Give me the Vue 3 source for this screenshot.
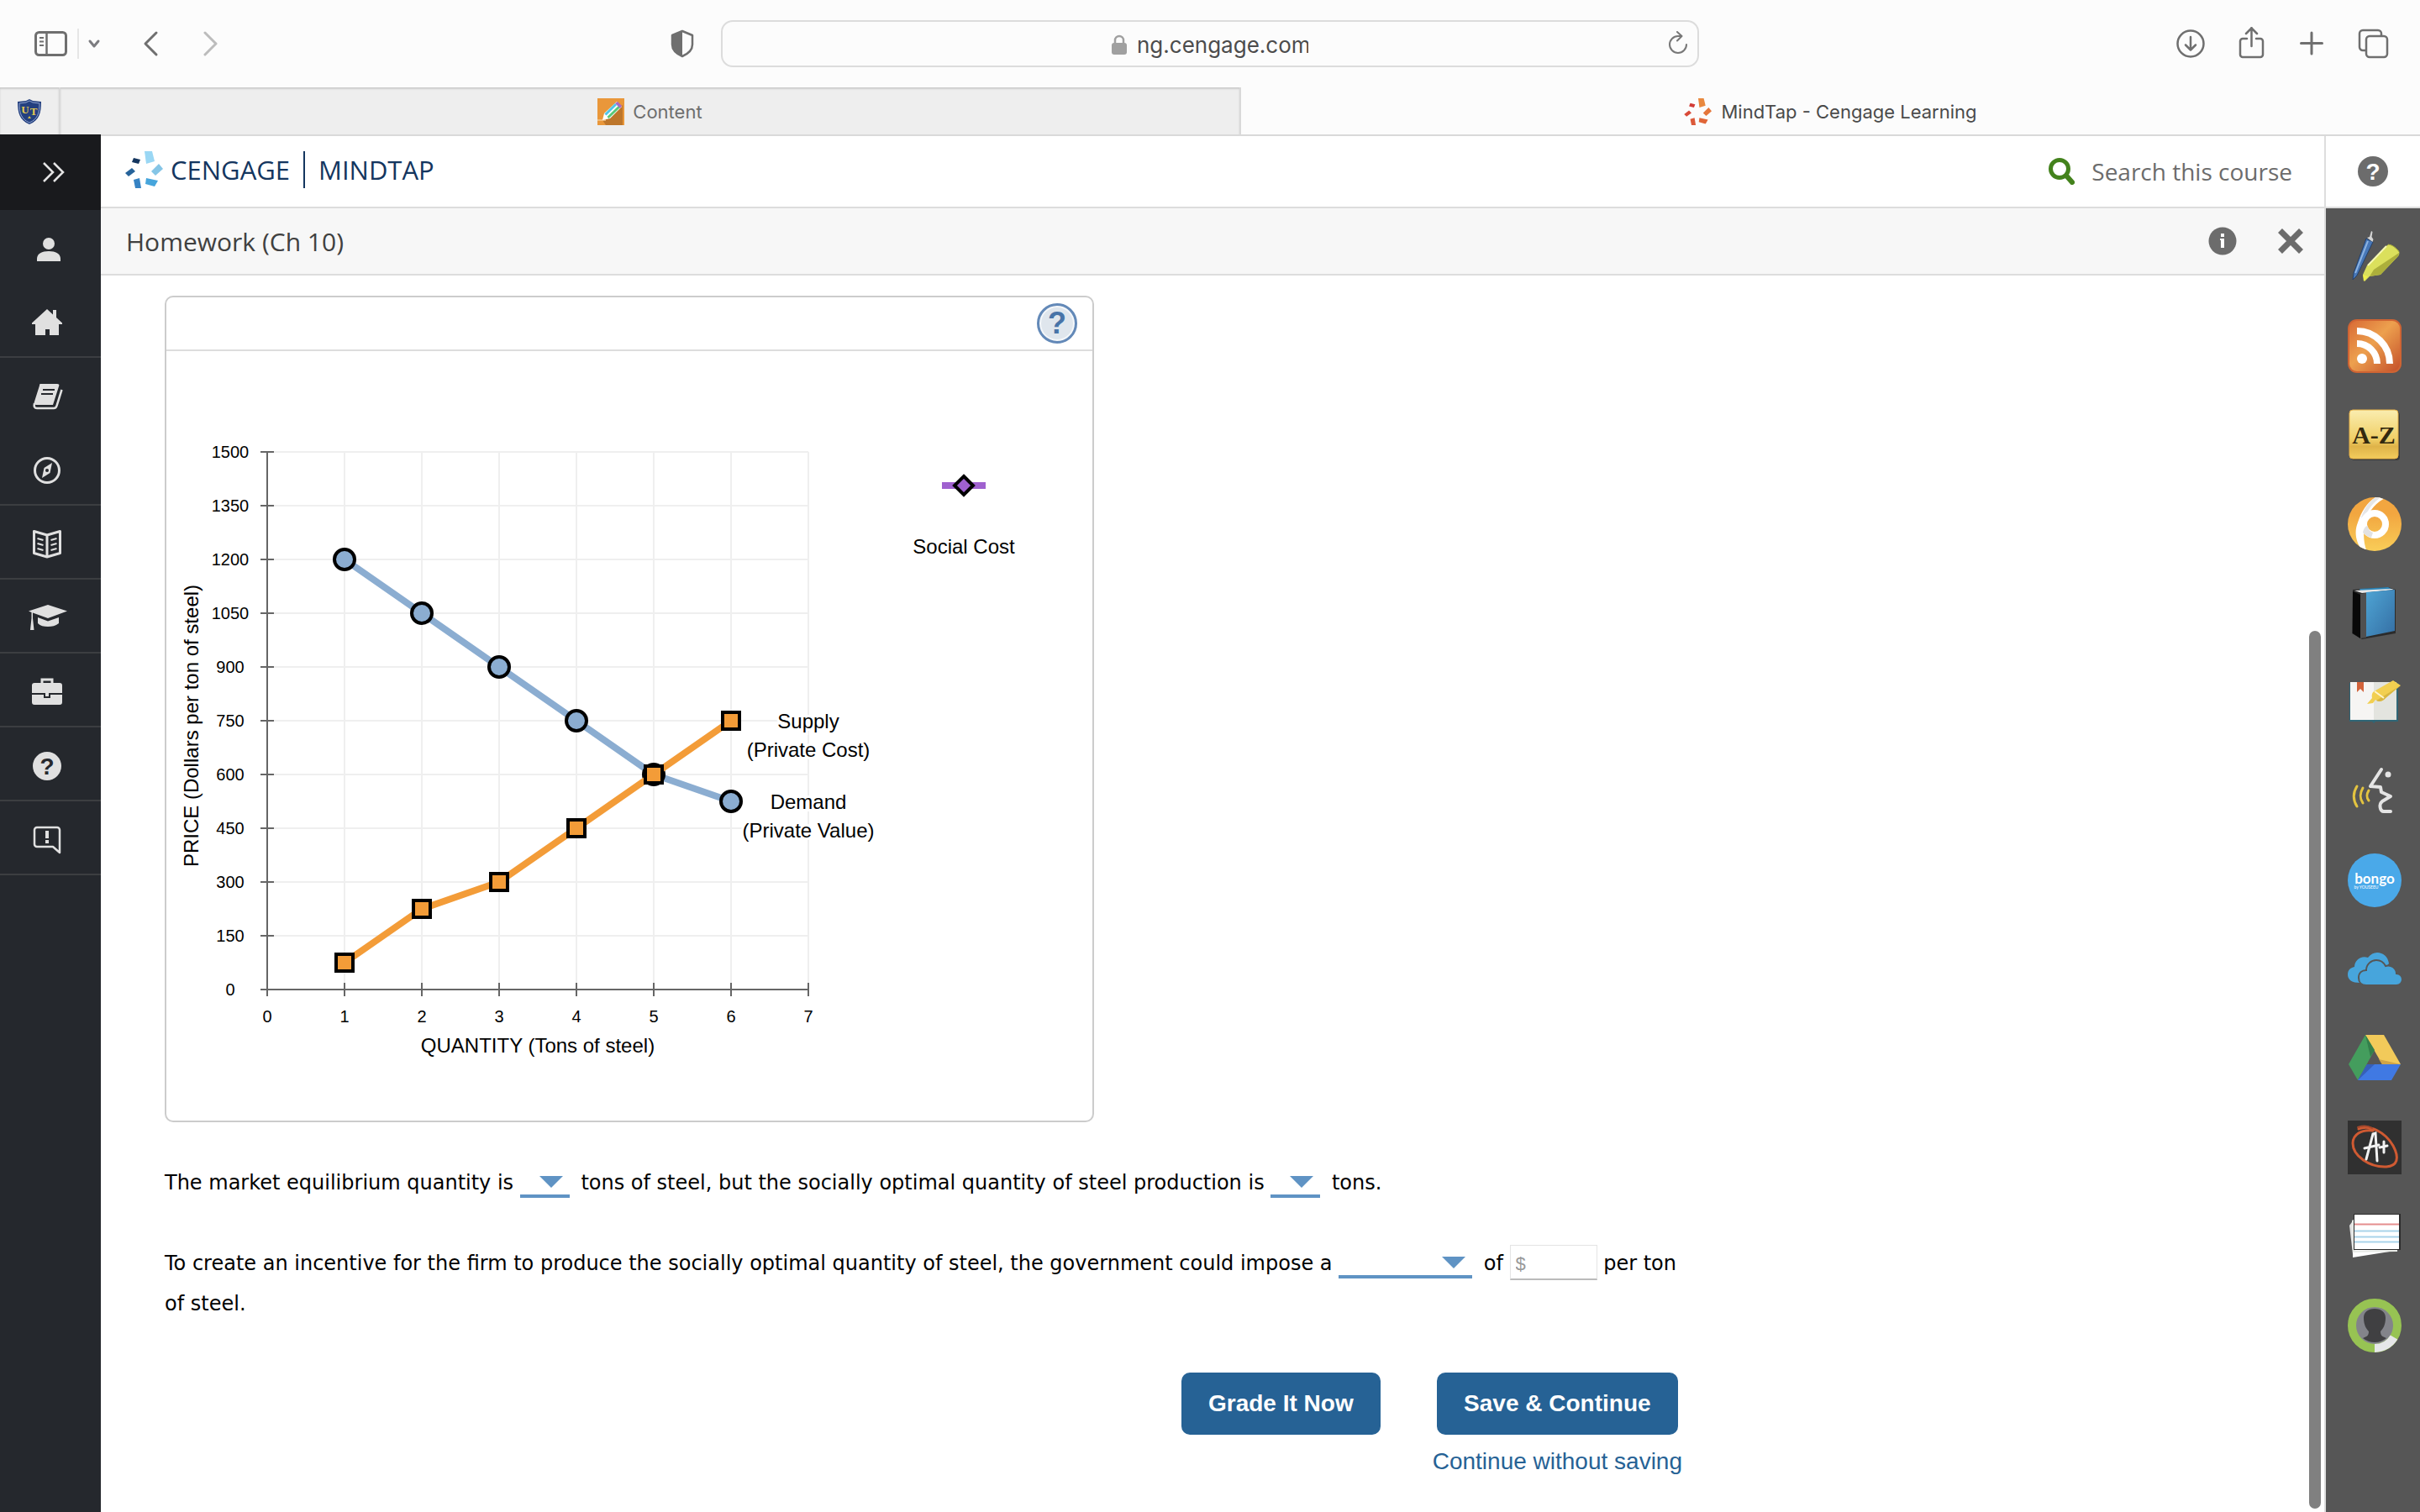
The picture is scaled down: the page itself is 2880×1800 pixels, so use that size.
<template>
  <div class="screen">
    <header class="browser">
      <div class="toolbar">
        <div class="toolbar-side">
          <button class="tool" aria-label="Show sidebar">
            <svg width="40" height="32" viewBox="0 0 40 32" fill="none" stroke="#6f6f6f">
              <rect x="1.5" y="2.5" width="36" height="27" rx="4" stroke-width="3" />
              <path d="M14.5 3v26" stroke-width="2.5" />
              <path d="M6 9h5M6 13.500h5M6 18h5" stroke-width="2" />
            </svg>
          </button>
          <span class="tool-divider"></span>
          <button class="tool tool--small" aria-label="Tab groups">
            <svg width="16" height="12" viewBox="0 0 16 12" fill="none" stroke="#7c7c80" stroke-width="3" stroke-linecap="round" stroke-linejoin="round">
              <path d="M3 3l5 6 5-6" />
            </svg>
          </button>
          <button class="tool tool--back" aria-label="Back">
            <svg width="20" height="32" viewBox="0 0 20 32" fill="none" stroke="#6f6f6f" stroke-width="3" stroke-linecap="round" stroke-linejoin="round">
              <path d="M16 3L3 16l13 13" />
            </svg>
          </button>
          <button class="tool tool--forward" aria-label="Forward" disabled>
            <svg width="20" height="32" viewBox="0 0 20 32" fill="none" stroke="#bcbcbc" stroke-width="3" stroke-linecap="round" stroke-linejoin="round">
              <path d="M4 3l13 13L4 29" />
            </svg>
          </button>
          <button class="tool tool--shield" aria-label="Privacy report">
            <svg width="28" height="34" viewBox="0 0 28 34" fill="none">
              <path d="M14 2l12 5v11c0 7-5 11-12 14C7 29 2 25 2 18V7z" stroke="#6f6f6f" stroke-width="2.500" stroke-linejoin="round" />
              <path d="M14 2v30C7 29 2 25 2 18V7z" fill="#6f6f6f" />
            </svg>
          </button>
        </div>

        <div class="address">
          <label class="address-field">
            <svg width="18" height="24" viewBox="0 0 18 24" fill="none">
              <rect x="0" y="10" width="18" height="14" rx="3" fill="#a0a0a0" />
              <path d="M4 11V7a5 5 0 0 1 10 0v4" stroke="#a0a0a0" stroke-width="2.500" />
            </svg>
            <input v-model="url" type="text" aria-label="Address" />
          </label>
          <button class="tool reload" aria-label="Reload">
            <svg width="26" height="30" viewBox="0 0 26 30" fill="none" stroke="#777" stroke-width="2" stroke-linecap="round" stroke-linejoin="round">
              <path d="M23 16a10 10 0 1 1-10-10h4M12 1l5.500 5L12 11.500" />
            </svg>
          </button>
        </div>

        <div class="toolbar-side toolbar-side--right">
          <button class="tool" aria-label="Downloads">
            <svg width="40" height="40" viewBox="0 0 40 40" fill="none" stroke="#6f6f6f" stroke-width="2.500" stroke-linecap="round" stroke-linejoin="round">
              <circle cx="19" cy="20" r="15.500" />
              <path d="M19 12v15M13 21.500l6 6 6-6" />
            </svg>
          </button>
          <button class="tool" aria-label="Share">
            <svg width="40" height="40" viewBox="0 0 40 40" fill="none" stroke="#6f6f6f" stroke-width="2.500" stroke-linecap="round" stroke-linejoin="round">
              <path d="M14 14H9a3 3 0 0 0-3 3v16a3 3 0 0 0 3 3h21a3 3 0 0 0 3-3V17a3 3 0 0 0-3-3h-5M19.500 23V1M13 8l6.500-6.500L26 8" />
            </svg>
          </button>
          <button class="tool" aria-label="New tab">
            <svg width="40" height="40" viewBox="0 0 40 40" fill="none" stroke="#6f6f6f" stroke-width="3" stroke-linecap="round">
              <path d="M19 7v25M6.500 19.500h25" />
            </svg>
          </button>
          <button class="tool" aria-label="Tab overview">
            <svg width="40" height="40" viewBox="0 0 40 40" fill="none" stroke="#6f6f6f" stroke-width="2.500">
              <rect x="12" y="11" width="25" height="25" rx="4" />
              <path d="M12 28H8a4 4 0 0 1-4-4V8a4 4 0 0 1 4-4h18a4 4 0 0 1 4 4v3" />
            </svg>
          </button>
        </div>
      </div>

      <div class="tabs">
        <button class="tab tab--pinned" aria-label="UT">
          <svg width="30" height="32" viewBox="0 0 30 32">
            <path d="M15 1l4 2 10 1c0 13-2 22-14 27C3 26 1 17 1 4l10-1z" fill="#24407f" />
            <path d="M15 3l4 2 8 1c0 11-2 19-12 23C5 25 3 17 3 6l8-1z" fill="none" stroke="#8fa3cf" stroke-width="1" />
            <text x="10" y="18" text-anchor="middle" class="shield-text">U</text>
            <text x="20" y="20" text-anchor="middle" class="shield-text">T</text>
            <path d="M13 24h4l-2-3z" fill="#d9bf4b" />
          </svg>
        </button>
        <button class="tab">
          <svg width="32" height="32" viewBox="0 0 32 32">
            <rect width="32" height="32" fill="#e9973a" />
            <path d="M30 8v24H10L6 26z" fill="#bd762b" />
            <path d="M0 26h10" stroke="#f4c68b" stroke-width="1.500" />
            <path d="M6 26l2-8L23 4l6 6-14 14z" fill="#fff" />
            <path d="M9.500 19.500L22 7" stroke="#4fc4e8" stroke-width="3" />
            <path d="M12.500 23L26 10" stroke="#58c878" stroke-width="3" />
            <path d="M21 6l3-2 5 5-2 3z" fill="#a869c4" />
          </svg>
          Content
        </button>
        <button class="tab tab--active">
          <svg width="34" height="32" viewBox="0 0 46 44">
            <polygon v-for="p in petals" :key="p.points" :points="p.points" :fill="p.warm" />
          </svg>
          MindTap - Cengage Learning
        </button>
      </div>
    </header>

    <div class="page">
      <nav class="sidebar">
        <button class="sidebar-toggle" aria-label="Expand menu">
          <svg width="28" height="24" viewBox="0 0 28 24" fill="none" stroke="#e4e4e4" stroke-width="2.500">
            <path d="M2 1l11 11L2 23M14 1l11 11-11 11" />
          </svg>
        </button>
        <button
          v-for="item in menu"
          :key="item.name"
          class="sidebar-item"
          :class="{ 'sidebar-item--line': item.line }"
          :aria-label="item.name"
        >
          <svg width="48" height="40" viewBox="0 0 48 40" fill="#e0e0e0">
            <template v-if="item.name === 'Profile'">
              <ellipse cx="26" cy="13" rx="7" ry="7" />
              <path d="M12 34v-3c0-6 6-9 14-9s14 3 14 9v3z" />
            </template>
            <path v-else-if="item.name === 'Home'" d="M24 4l7 6.500V5h4v9l7 6.500V22h-4v13H27v-7h-5v7H10V22H6v-1.500z" />
            <template v-else-if="item.name === 'Bookshelf'">
              <path d="M16 4h20c2 0 3 1 2 3l-7 22H12c-3 0-4-1-3-4l6-19c0-1 0-2 1-2z" />
              <path d="M9 27c-1 4 0 6 3 6h20c2 0 3-1 3.500-3l6-19" fill="none" stroke="#e0e0e0" stroke-width="2.500" />
              <path d="M19 11h14M17 16h14" stroke="#25282d" stroke-width="2" />
            </template>
            <template v-else-if="item.name === 'Explore'">
              <circle cx="24" cy="20" r="14.500" fill="none" stroke="#e0e0e0" stroke-width="3" />
              <path d="M30 11l-2.500 12L18 29l2.500-12z" />
              <circle cx="24" cy="20" r="2" fill="#25282d" />
            </template>
            <g v-else-if="item.name === 'Reader'" fill="none" stroke="#e0e0e0" stroke-width="3" stroke-linejoin="round">
              <path d="M24 9L8.500 4.500v26L24 35l15.500-4.500v-26zM24 9v26" />
              <path d="M12.500 13l7 2M12.500 19l7 2M12.500 25l7 2M35.500 13l-7 2M35.500 19l-7 2M35.500 25l-7 2" stroke-width="2" />
            </g>
            <template v-else-if="item.name === 'Grades'">
              <path d="M25 4l23 7.500L25 20 7 13.500V20l1.500 14H4l1.500-14V13L2 11.500z" />
              <path d="M13 19l12 4.500L38 19v7c-4 3-8 4-13 4s-9-1-12-4z" />
            </template>
            <template v-else-if="item.name === 'Tools'">
              <path d="M18 10V5h12v5" fill="none" stroke="#e0e0e0" stroke-width="3" />
              <path d="M9 9h30a3 3 0 0 1 3 3v9H6v-9a3 3 0 0 1 3-3zM6 23h14v4h8v-4h14v9a3 3 0 0 1-3 3H9a3 3 0 0 1-3-3zM22 21h4v4h-4z" />
            </template>
            <template v-else-if="item.name === 'Help'">
              <circle cx="24" cy="20" r="17" />
              <text x="24" y="30" text-anchor="middle" class="menu-mark">?</text>
            </template>
            <template v-else>
              <path d="M12 5h24a3 3 0 0 1 3 3v27l-8-7H12a3 3 0 0 1-3-3V8a3 3 0 0 1 3-3z" fill="none" stroke="#e0e0e0" stroke-width="2.500" stroke-linejoin="round" />
              <path d="M22 9h4v9h-4zM22 20h4v4h-4z" />
            </template>
          </svg>
        </button>
      </nav>

      <main class="main">
        <div class="brand-bar">
          <a class="brand" href="#">
            <svg width="46" height="44" viewBox="0 0 46 44">
              <polygon v-for="p in petals" :key="p.points" :points="p.points" :fill="p.cool" />
            </svg>
            <span>CENGAGE</span>
            <span class="brand-line"></span>
            <span>MINDTAP</span>
          </a>
          <button class="search">
            <svg width="32" height="32" viewBox="0 0 32 32" fill="none" stroke="#43821c">
              <circle cx="14" cy="13" r="10.500" stroke-width="5" />
              <path d="M22 21l7 8" stroke-width="6" stroke-linecap="round" />
            </svg>
            Search this course
          </button>
        </div>

        <div class="title-bar">
          <h1>Homework (Ch 10)</h1>
          <button class="icon-button" aria-label="Information">
            <svg width="34" height="34" viewBox="0 0 34 34">
              <circle cx="17" cy="17" r="16.500" fill="#6c6c6c" />
              <path d="M15 8h4v4h-4zM14 14h5v11h-4v-9h-1z" fill="#fff" />
            </svg>
          </button>
          <button class="icon-button" aria-label="Close">
            <svg width="32" height="32" viewBox="0 0 32 32" stroke="#6c6c6c" stroke-width="7">
              <path d="M3.500 3.500l25 25M28.500 3.500l-25 25" />
            </svg>
          </button>
        </div>

        <div class="workspace">
          <div class="content">
            <section class="graph">
              <div class="graph-head">
                <button class="graph-help" aria-label="Graph help">?</button>
              </div>
              <svg class="graph-canvas" viewBox="0 0 1102 916">
                <g stroke="#efefef" stroke-width="2">
                  <line v-for="n in 7" :key="'v' + n" :x1="px(n)" :x2="px(n)" :y1="py(1500)" :y2="py(0)" />
                  <line v-for="n in 10" :key="'h' + n" :x1="px(0)" :x2="px(7)" :y1="py(n * 150)" :y2="py(n * 150)" />
                </g>
                <g stroke="#666" stroke-width="2">
                  <line :x1="px(0)" :x2="px(0)" :y1="py(1500)" :y2="py(0) + 8" />
                  <line :x1="px(0) - 8" :x2="px(7)" :y1="py(0)" :y2="py(0)" />
                  <line v-for="n in 7" :key="'tx' + n" :x1="px(n)" :x2="px(n)" :y1="py(0) - 8" :y2="py(0) + 8" />
                  <line v-for="n in 10" :key="'ty' + n" :x1="px(0) - 8" :x2="px(0) + 8" :y1="py(n * 150)" :y2="py(n * 150)" />
                </g>

                <g class="tick-text">
                  <text v-for="n in 11" :key="'ly' + n" x="76" :y="py((n - 1) * 150) + 7">{{ (n - 1) * 150 }}</text>
                  <text v-for="n in 8" :key="'lx' + n" :x="px(n - 1)" y="799">{{ n - 1 }}</text>
                </g>

                <g class="label-text">
                  <text x="442" y="835">QUANTITY (Tons of steel)</text>
                  <text transform="translate(38 446) rotate(-90)">PRICE (Dollars per ton of steel)</text>
                  <text x="764" y="449">Supply</text>
                  <text x="764" y="483">(Private Cost)</text>
                  <text x="764" y="545">Demand</text>
                  <text x="764" y="579">(Private Value)</text>
                  <text x="949" y="241">Social Cost</text>
                </g>

                <polyline :points="toLine(demand)" fill="none" stroke="#8badd1" stroke-width="8" />
                <circle v-for="d in demand" :key="'d' + d[0]" :cx="px(d[0])" :cy="py(d[1])" r="12" fill="#8badd1" stroke="#000" stroke-width="4" />
                <polyline :points="toLine(supply)" fill="none" stroke="#f39c38" stroke-width="8" />
                <rect v-for="s in supply" :key="'s' + s[0]" :x="px(s[0]) - 10" :y="py(s[1]) - 10" width="20" height="20" fill="#f39c38" stroke="#000" stroke-width="4" />

                <path d="M923 160h52" stroke="#9f61cf" stroke-width="8" />
                <path d="M949 149l11 11-11 11-11-11z" fill="#9f61cf" stroke="#000" stroke-width="4" />
              </svg>
            </section>

            <p class="question">
              The market equilibrium quantity is
              <span class="dropdown">
                <select v-model="answers.market" aria-label="Market equilibrium quantity">
                  <option value=""></option>
                  <option v-for="n in 6" :key="n">{{ n }}</option>
                </select>
              </span>
              tons of steel, but the socially optimal quantity of steel production is
              <span class="dropdown">
                <select v-model="answers.optimal" aria-label="Socially optimal quantity">
                  <option value=""></option>
                  <option v-for="n in 6" :key="n">{{ n }}</option>
                </select>
              </span>
              tons.
            </p>
            <p class="question">
              To create an incentive for the firm to produce the socially optimal quantity of steel, the government could impose a
              <span class="dropdown dropdown--wide">
                <select v-model="answers.policy" aria-label="Policy">
                  <option value=""></option>
                  <option>tax</option>
                  <option>subsidy</option>
                </select>
              </span>
              of
              <input v-model="answers.amount" class="amount" type="text" placeholder="$" aria-label="Amount per ton" />
              <span> per ton </span><span>of steel.</span>
            </p>

            <div class="actions">
              <button class="primary">Grade It Now</button>
              <div class="save">
                <button class="primary">Save &amp; Continue</button>
                <a href="#">Continue without saving</a>
              </div>
            </div>
          </div>
          <div class="scroll-track"><div class="scroll-thumb"></div></div>
        </div>
      </main>

      <aside class="rail">
        <button class="rail-help" aria-label="Help">
          <svg width="36" height="36" viewBox="0 0 36 36">
            <circle cx="18" cy="18" r="18" fill="#6c6c6c" />
            <text x="18" y="28" text-anchor="middle" class="rail-mark">?</text>
          </svg>
        </button>
        <div class="apps">
          <button class="app" aria-label="Highlighter">
            <svg viewBox="0 0 64 64">
              <path d="M22 10l8 4L11 54l-5 5 1-8z" fill="#4878b8" stroke="#23406c" stroke-width="1" />
              <path d="M24 13L9 51" stroke="#8db4e2" stroke-width="2" />
              <path d="M23 9l3-1 2-7 1.500 1-1 6 2 3-1 3z" fill="#d4d4d4" />
              <path d="M23 42l24-24c2-2 4-1 7 1l7 6c1 3 0 5-2 7L39 53l-13 2-6 6-2-8z" fill="#dbe05c" />
              <path d="M26 55l5-8 30-20c0 3-1 4-3 6L39 53z" fill="#acaf3b" />
              <path d="M18 53l6 2-5 6z" fill="#f0f04c" />
              <path d="M24 42l22-23" stroke="#f6f8b4" stroke-width="2" />
              <path d="M48 17c6 1 10 4 13 9" fill="none" stroke="#a9ac3a" stroke-width="1" />
            </svg>
          </button>
          <button class="app" aria-label="RSS feed">
            <svg viewBox="0 0 64 64">
              <defs>
                <linearGradient id="rss" x1="0" y1="0" x2="1" y2="1">
                  <stop offset="0" stop-color="#d96b35" />
                  <stop offset=".45" stop-color="#eda04e" />
                  <stop offset="1" stop-color="#c4502a" />
                </linearGradient>
              </defs>
              <rect width="64" height="64" rx="11" fill="#cf6433" />
              <rect x="2" y="2" width="60" height="60" rx="9" fill="url(#rss)" />
              <circle cx="17" cy="47" r="6" fill="#fff" />
              <path d="M11 29a24 24 0 0 1 24 24M11 14a39 39 0 0 1 39 39" fill="none" stroke="#fff" stroke-width="8" />
            </svg>
          </button>
          <button class="app" aria-label="Glossary">
            <svg viewBox="0 0 64 64">
              <defs>
                <linearGradient id="az" x1="0" y1="0" x2="0" y2="1">
                  <stop offset="0" stop-color="#faedb0" />
                  <stop offset=".6" stop-color="#f0cf66" />
                  <stop offset=".75" stop-color="#dfb349" />
                  <stop offset="1" stop-color="#f3cc5c" />
                </linearGradient>
              </defs>
              <rect x="4" y="4" width="58" height="58" rx="4" fill="#3b3b3b" />
              <rect x="2" y="2" width="58" height="58" rx="4" fill="url(#az)" stroke="#e6b047" stroke-width="1" />
              <text x="31" y="42" text-anchor="middle" class="az-text">A-Z</text>
            </svg>
          </button>
          <button class="app" aria-label="Six">
            <svg viewBox="0 0 64 64">
              <defs>
                <linearGradient id="six" x1="0" y1="0" x2="0" y2="1">
                  <stop offset=".3" stop-color="#f2a640" />
                  <stop offset="1" stop-color="#f9cd58" />
                </linearGradient>
                <clipPath id="six-clip"><circle cx="32" cy="32" r="32" /></clipPath>
              </defs>
              <circle cx="32" cy="32" r="32" fill="url(#six)" />
              <g clip-path="url(#six-clip)">
                <path d="M33 0h13C34 6 26 15 22 27c-4 12-4 26 1 38h-4C10 56 7 42 12 30 16 17 23 6 33 0z" fill="#fff" />
                <path d="M16 24C20 12 26 5 33 0h6C30 7 24 14 20 25z" fill="#e6e6e6" />
                <circle cx="32" cy="32" r="13" fill="none" stroke="#fff" stroke-width="8" />
                <path d="M18 42c1-5 3-8 6-8 0 4 3 7 6 8l-2 6c-4-1-7-3-10-6z" fill="#e2e2e2" />
              </g>
            </svg>
          </button>
          <button class="app" aria-label="Book">
            <svg viewBox="0 0 64 64">
              <defs>
                <linearGradient id="book" x1="0" y1="0" x2="1" y2="1">
                  <stop offset="0" stop-color="#4ea4d4" />
                  <stop offset="1" stop-color="#356fa4" />
                </linearGradient>
              </defs>
              <path d="M6 4l42-3 9 3v52l-40 7-12-7z" fill="#2b2b2b" />
              <path d="M14 3l34-2 6 3-38 3z" fill="#2f86b8" />
              <path d="M8 5l44-2 3 1-38 4z" fill="#e8e8e8" />
              <path d="M6 6l9 4v52l-9-6z" fill="#080808" />
              <path d="M15 9l7-1v53l-7 1z" fill="#505050" />
              <path d="M22 7l34-3v49l-34 7z" fill="url(#book)" />
            </svg>
          </button>
          <button class="app" aria-label="Notebook">
            <svg viewBox="0 0 64 64">
              <path d="M2 9h58v46H33l-2 2-2-2H2z" fill="#2f6676" />
              <path d="M3 8h28v45H3z" fill="#f6f5f3" />
              <path d="M31 8h27v45H31z" fill="#e3e4df" />
              <path d="M11 8h8v12l-4-4-4 4z" fill="#d2633a" />
              <path d="M54 6l9 6-18 15c-3 4-8 5-12 2l-3 4-7 1 6-7c-1-5 1-8 4-9z" fill="#f2cf50" />
              <path d="M63 12L45 27c-3 4-8 5-11 3z" fill="#d8b640" />
              <path d="M32 19l11 8" stroke="#fff5cb" stroke-width="2" />
            </svg>
          </button>
          <button class="app" aria-label="Read aloud">
            <svg viewBox="0 0 64 64" fill="none" stroke-linecap="round">
              <path d="M11 26c-5 8-5 16 0 24M18 28c-4 7-4 12 0 18M25 31c-3 5-3 8 0 12" stroke="#e3c440" stroke-width="3" />
              <path d="M40 6L27 26l12 1 1 6 11 5-10 6c-4 3-3 12 2 12h8" stroke="#e4e4e4" stroke-width="4" stroke-linejoin="round" />
              <circle cx="48" cy="12" r="3.500" fill="#e4e4e4" />
            </svg>
          </button>
          <button class="app" aria-label="Bongo">
            <svg viewBox="0 0 64 64">
              <circle cx="32" cy="32" r="32" fill="#4aa9e9" />
              <text x="32" y="36" text-anchor="middle" class="bongo-text">bongo</text>
              <text x="22" y="42" text-anchor="middle" class="bongo-small">by YOUSEEU</text>
            </svg>
          </button>
          <button class="app" aria-label="OneDrive">
            <svg viewBox="0 0 64 64" fill="#47a5dc">
              <path d="M14 48c-8 0-14-3-14-10 0-5 3-8 8-9 0-8 8-14 16-11 3-4 7-6 11-6 7 0 13 5 14 13L30 48z" />
              <path d="M22 51c-6 0-9-4-9-9 0-6 4-9 9-9 0-7 6-12 12-12 6 0 9 3 11 7 7-2 13 3 13 9 4 0 7 3 7 7s-3 7-7 7z" stroke="#565656" stroke-width="2" />
            </svg>
          </button>
          <button class="app" aria-label="Google Drive">
            <svg viewBox="0 0 64 64">
              <path d="M21 4l11 18-20 36L1 39z" fill="#449d5d" />
              <path d="M21 4h22l20 35H41z" fill="#f2ca5a" />
              <path d="M23 39h40L52 58H12z" fill="#4079e3" />
              <path d="M21 4l11 18-5 8z" fill="#337f4b" />
              <path d="M37 33l26 6H41z" fill="#d0a446" />
              <path d="M12 58l11-19h9z" fill="#365fb8" />
            </svg>
          </button>
          <button class="app" aria-label="A+">
            <svg viewBox="0 0 64 64" fill="none" stroke-linecap="round">
              <rect width="64" height="64" fill="#303030" />
              <path d="M13 10C26 4 45 14 54 30c8 15 5 24-8 25C26 56 6 42 6 27c0-10 10-17 24-15" stroke="#cf5a32" stroke-width="3" />
              <path d="M12 8c6-2 12-2 17 1" stroke="#a6492c" stroke-width="2" />
              <path d="M22 46l8-30 3-1 2 33M20 33l17-4M43 25v13M38 32l9-2" stroke="#f2f2f2" stroke-width="3" />
            </svg>
          </button>
          <button class="app" aria-label="Flashcards">
            <svg viewBox="0 0 64 64">
              <path d="M2 19l5-7 2 40-3 1z" fill="#e2e2e2" />
              <path d="M6 48l50-3v4L6 57z" fill="#fff" />
              <path d="M5 13l4-2v38l50-2v3L6 51z" fill="#e9ebe7" />
              <rect x="7" y="5" width="56" height="43" fill="#2c2c2c" />
              <rect x="8" y="6" width="53" height="41" fill="#fff" />
              <path d="M8 17.500h53" stroke="#e58e8e" stroke-width="2" />
              <path d="M8 25.500h53M8 32.500h53M8 38.500h53" stroke="#a9d4ea" stroke-width="2" />
            </svg>
          </button>
          <button class="app" aria-label="Profile progress">
            <svg viewBox="0 0 64 64">
              <circle cx="32" cy="32" r="27" fill="#83848a" stroke="#97c353" stroke-width="10" />
              <path d="M32 59a27 27 0 0 0 23-13" fill="none" stroke="#e6e7e9" stroke-width="10" />
              <path d="M32 12c8 0 13 4 13 11 0 8-3 13-6 16 0 5 2 6 7 8a22 22 0 0 1-28 0c5-2 7-3 7-8-3-3-6-8-6-16 0-7 5-11 13-11z" fill="#404042" />
            </svg>
          </button>
        </div>
      </aside>
    </div>
  </div>
</template>

<script setup>
import { ref, reactive } from 'vue'

const url = ref('ng.cengage.com')
const answers = reactive({ market: '', optimal: '', policy: '', amount: '' })

const menu = [
  { name: 'Profile', line: false },
  { name: 'Home', line: true },
  { name: 'Bookshelf', line: false },
  { name: 'Explore', line: true },
  { name: 'Reader', line: true },
  { name: 'Grades', line: true },
  { name: 'Tools', line: true },
  { name: 'Help', line: true },
  { name: 'Feedback', line: true }
]

const petals = [
  { points: '23,0 32,0 35,12 25,15', cool: '#9ad7f4', warm: '#e9893f' },
  { points: '31,24 40,15 45,21 36,29', cool: '#85c5e6', warm: '#e5763a' },
  { points: '25,32 39,35 35,42 24,39', cool: '#46a5dc', warm: '#e06638' },
  { points: '10,34 17,32 19,44 12,44', cool: '#3683c4', warm: '#dc5a3a' },
  { points: '0,26 8,20 12,24 4,30', cool: '#26639a', warm: '#d94a38' },
  { points: '10,8 18,10 16,15 8,13', cool: '#14365f', warm: '#d23c36' }
]

// [quantity, price]
const demand = [[1, 1200], [2, 1050], [3, 900], [4, 750], [5, 600], [6, 525]]
const supply = [[1, 75], [2, 225], [3, 300], [4, 450], [5, 600], [6, 750]]

const px = (q) => 120 + q * 92
const py = (price) => 760 - (price / 150) * 64
const toLine = (points) => points.map(([q, p]) => `${px(q)},${py(p)}`).join(' ')
</script>

<style>
body {
  margin: 0;
  background: #fff;
}
</style>

<style scoped>
.screen {
  display: flex;
  flex-direction: column;
  min-height: 100vh;
  font-family: "Open Sans", "Noto Sans", sans-serif;
  color: #404040;
}

button {
  padding: 0;
  border: 0;
  background: none;
  font: inherit;
  color: inherit;
  cursor: pointer;
}

svg {
  display: block;
  flex: none;
}

/* browser chrome */
.browser {
  background: #fcfcfc;
  font-family: Inter, sans-serif;
}

.toolbar {
  display: grid;
  grid-template-columns: 1fr 41% 1fr;
  align-items: center;
  height: 104px;
}

.toolbar-side {
  display: flex;
  align-items: center;
  padding-left: 41px;
}

.toolbar-side--right {
  justify-content: flex-end;
  gap: 32px;
  padding: 0 36px 0 0;
}

.tool-divider {
  width: 2px;
  height: 36px;
  margin: 0 10px 0 11px;
  background: #e6e6e6;
}

.tool--back {
  margin-left: 50px;
}

.tool--forward {
  margin-left: 50px;
}

.tool--shield {
  margin-left: auto;
  margin-right: 24px;
}

.address {
  display: grid;
  grid-template-columns: 1fr auto 1fr;
  align-items: center;
  height: 52px;
  margin: 0 8px;
  border: 2px solid #dcdcdc;
  border-radius: 14px;
}

.address-field {
  display: flex;
  grid-column: 2;
  align-items: center;
  gap: 12px;
  padding-top: 2px;
}

.address-field input {
  width: 204px;
  padding: 0;
  border: 0;
  outline: 0;
  background: none;
  font: 26px Inter, sans-serif;
  color: #4c4c4c;
}

.reload {
  justify-self: end;
  margin-right: 10px;
}

.tabs {
  display: flex;
  height: 56px;
  border-bottom: 2px solid #d9d9d9;
}

.tab {
  display: flex;
  flex: 1;
  align-items: center;
  justify-content: center;
  gap: 10px;
  padding-top: 2px;
  border-right: 2px solid #d9d9d9;
  background: #eee;
  box-shadow: inset 0 2px 2px #ccc;
  font-size: 22px;
  color: #6e6e6e;
}

.tab--pinned {
  flex: none;
  width: 72px;
}

.tab--active {
  border-right: 0;
  background: #fcfcfc;
  box-shadow: none;
  color: #4a4a4a;
}

.shield-text {
  font: bold 13px "Liberation Serif", serif;
  fill: #e6cc50;
}

/* page */
.page {
  display: flex;
  flex: 1;
}

/* the dark column covers the line under the tabs */
.sidebar {
  display: flex;
  flex-direction: column;
  width: 120px;
  margin-top: -2px;
  background: #25282d;
}

.sidebar-toggle {
  display: flex;
  align-items: center;
  justify-content: center;
  height: 90px;
  padding-left: 8px;
  background: #191a1d;
}

.sidebar-item {
  display: flex;
  align-items: center;
  height: 88px;
  padding: 6px 0 0 32px;
}

.sidebar-item--line {
  border-bottom: 2px solid #3c3e41;
}

.menu-mark {
  font: bold 28px "Liberation Sans", sans-serif;
  fill: #25282d;
}

.main {
  display: flex;
  flex: 1;
  flex-direction: column;
  min-width: 0;
  border-right: 2px solid #ddd;
}

.brand-bar {
  display: flex;
  align-items: center;
  justify-content: space-between;
  height: 84px;
  padding: 0 38px 0 29px;
  border-bottom: 2px solid #ddd;
}

.brand {
  display: flex;
  align-items: center;
  gap: 8px;
  margin-bottom: 4px;
  font-size: 31px;
  color: #14365f;
  text-decoration: none;
}

.brand-line {
  width: 2px;
  height: 44px;
  margin: 0 8px;
  background: #14365f;
}

.search {
  display: flex;
  align-items: center;
  gap: 20px;
  font-size: 28px;
  color: #6c6c6c;
}

.title-bar {
  display: flex;
  align-items: center;
  gap: 48px;
  height: 78px;
  padding: 0 24px 0 30px;
  border-bottom: 2px solid #ddd;
  background: #f7f7f7;
}

.title-bar h1 {
  flex: 1;
  margin: 0;
  font-size: 30px;
  font-weight: 400;
}

.workspace {
  display: flex;
  flex: 1;
}

.content {
  flex: 1;
  padding: 24px 76px 24px;
}

.graph {
  max-width: 1102px;
  border: 2px solid #ccc;
  border-radius: 10px;
}

.graph-head {
  display: flex;
  align-items: center;
  justify-content: flex-end;
  height: 62px;
  padding-right: 18px;
  border-bottom: 2px solid #ddd;
}

.graph-help {
  width: 48px;
  height: 48px;
  border: 3px solid #6389b8;
  border-radius: 50%;
  background: #dfe6ed;
  box-shadow: inset 0 0 0 2px #f4f7fa;
  font: bold 36px "Liberation Sans", sans-serif;
  color: #4874a8;
}

.graph-canvas {
  width: 100%;
}

.tick-text {
  font: 20px "Liberation Sans", sans-serif;
  text-anchor: middle;
}

.label-text {
  font: 24px "Liberation Sans", sans-serif;
  text-anchor: middle;
  stroke: #fff;
  stroke-width: 6px;
  paint-order: stroke;
}

.question {
  max-width: 1806px;
  margin: 48px 0 0;
  font: 24px/48px "DejaVu Sans", sans-serif;
  color: #000;
}

.dropdown {
  display: inline-grid;
  align-items: center;
  width: 59px;
  height: 30px;
  margin-right: 6px;
  border-bottom: 4px solid #5f93c4;
  vertical-align: middle;
}

.dropdown--wide {
  width: 159px;
}

.dropdown select {
  grid-area: 1 / 1;
  width: 100%;
  height: 30px;
  padding: 0;
  border: 0;
  appearance: none;
  background: none;
  font: inherit;
  line-height: 30px;
}

.dropdown::after {
  content: "";
  grid-area: 1 / 1;
  justify-self: end;
  margin-right: 8px;
  border: 14px solid transparent;
  border-top-color: #5f93c4;
  border-bottom: 0;
  pointer-events: none;
}

.amount {
  width: 104px;
  height: 42px;
  margin: 0 0 4px;
  padding: 4px 6px 0;
  box-sizing: border-box;
  border: 1px solid #e4e4e4;
  border-bottom: 2px solid #bbb;
  font: 22px "Liberation Sans", sans-serif;
  vertical-align: middle;
}

.amount::placeholder {
  color: #999;
}

.actions {
  display: flex;
  align-items: flex-start;
  justify-content: flex-end;
  gap: 62px;
  max-width: 1806px;
  margin-top: 58px;
  font: 28px "Liberation Sans", sans-serif;
}

.primary {
  height: 74px;
  padding: 0 32px;
  border-radius: 10px;
  background: #266295;
  font-weight: 700;
  color: #fff;
}

.save {
  display: flex;
  flex-direction: column;
  align-items: center;
  gap: 12px;
}

.save a {
  line-height: 40px;
  color: #266295;
  text-decoration: none;
}

.scroll-track {
  display: flex;
  flex-direction: column;
  justify-content: flex-end;
  padding-right: 4px;
}

.scroll-thumb {
  width: 14px;
  height: 71%;
  margin-bottom: 4px;
  border-radius: 7px;
  background: #808080;
}

/* app rail */
.rail {
  display: flex;
  flex-direction: column;
  width: 112px;
}

.rail-help {
  display: flex;
  align-items: center;
  justify-content: center;
  height: 86px;
  border-bottom: 2px solid #ddd;
}

.rail-mark {
  font: bold 28px "Liberation Sans", sans-serif;
  fill: #fff;
}

.apps {
  display: flex;
  flex: 1;
  flex-direction: column;
  padding-top: 5px;
  background: #565656;
}

.app {
  display: flex;
  align-items: center;
  justify-content: center;
  height: 106px;
  padding-left: 4px;
}

.app svg {
  width: 64px;
  height: 64px;
}

.az-text {
  font: bold 30px "Liberation Serif", serif;
  fill: #33290f;
}

.bongo-text {
  font: bold 17px Lato, sans-serif;
  fill: #fff;
}

.bongo-small {
  font: 5px Lato, sans-serif;
  fill: #fff;
}
</style>
